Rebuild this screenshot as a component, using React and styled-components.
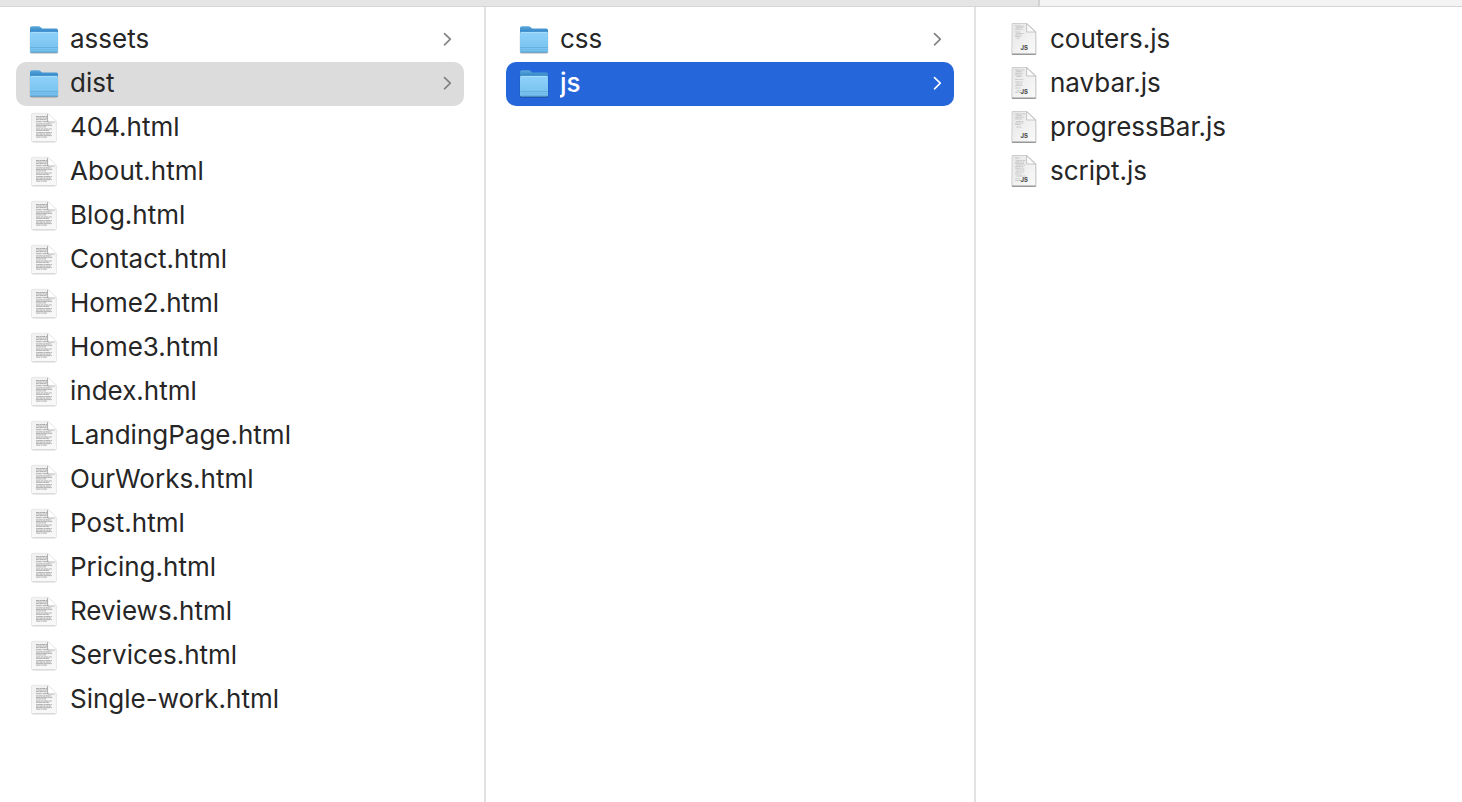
import React, { useState } from "react";
import styled, { createGlobalStyle } from "styled-components";

const GlobalStyle = createGlobalStyle`
  * { box-sizing: border-box; }
  body { margin: 0; background: #ffffff; }
`;

const Window = styled.main`
  display: flex;
  flex-direction: column;
  min-height: 100vh;
  font-family: Inter, "Liberation Sans", sans-serif;
  font-size: 26px;
  color: #262626;
  -webkit-font-smoothing: antialiased;
`;

const TabStrip = styled.div`
  display: grid;
  grid-template-columns: 1040fr 422fr;
  height: 7px;
  border-bottom: 1px solid #d6d6d6;
`;

const TabEdge = styled.div`
  background: ${(p) => (p.$active ? "#f3f3f3" : "#e5e5e5")};
  border-right: ${(p) => (p.$active ? "0" : "2px solid #d2d2d2")};
`;

const Columns = styled.div`
  flex: 1;
  display: grid;
  grid-template-columns: 486fr 490fr 486fr;
`;

const Column = styled.ul`
  list-style: none;
  margin: 0;
  min-width: 0;
  padding: 11px 20px 11px ${(p) => (p.$first ? "16px" : "20px")};
  border-right: ${(p) => (p.$last ? "0" : "2px solid #e2e2e2")};
`;

const highlights = { none: "transparent", path: "#dcdcdc", active: "#2566da" };

const Row = styled.button`
  display: flex;
  align-items: center;
  gap: 10px;
  width: 100%;
  height: 44px;
  padding: 0 12px;
  border: 0;
  border-radius: 10px;
  background: ${(p) => highlights[p.$highlight]};
  color: ${(p) => (p.$highlight === "active" ? "#ffffff" : "inherit")};
  font: inherit;
  font-weight: ${(p) => (p.$highlight === "active" ? 500 : 400)};
  text-align: left;
`;

const Name = styled.span`
  flex: 1;
  min-width: 0;
  line-height: 32px;
  padding-bottom: 2px;
  white-space: nowrap;
  overflow: hidden;
  text-overflow: ellipsis;
`;

const Glyph = styled.svg`
  display: block;
  flex: none;
`;

const ChevronGlyph = styled(Glyph)`
  color: ${(p) => (p.$light ? "#ffffff" : "#808080")};
`;

const Definitions = styled.svg`
  position: absolute;
`;

function Gradients() {
  return (
    <Definitions width="0" height="0" aria-hidden="true">
      <defs>
        <linearGradient id="folderBack" x1="0" y1="0" x2="0" y2="1">
          <stop offset="0" stopColor="#5ba9dc" />
          <stop offset="0.25" stopColor="#3d8ecb" />
          <stop offset="1" stopColor="#4a9bd2" />
        </linearGradient>
        <linearGradient id="folderFront" x1="0" y1="0" x2="0" y2="1">
          <stop offset="0" stopColor="#8ed1fa" />
          <stop offset="1" stopColor="#74c0ee" />
        </linearGradient>
        <linearGradient id="page" x1="0" y1="0" x2="0" y2="1">
          <stop offset="0" stopColor="#f1f1f1" />
          <stop offset="1" stopColor="#f9f9f9" />
        </linearGradient>
        <linearGradient id="script" x1="0" y1="0" x2="1" y2="1">
          <stop offset="0" stopColor="#e6e6e6" />
          <stop offset="1" stopColor="#fafafa" />
        </linearGradient>
      </defs>
    </Definitions>
  );
}

function FolderIcon() {
  return (
    <Glyph width="32" height="34" viewBox="0 0 32 34" aria-hidden="true">
      <rect x="1.6" y="9" width="28.8" height="21.8" rx="1.8" fill="#000" opacity="0.12" />
      <rect x="2" y="9" width="28" height="21.3" rx="1.5" fill="#000" opacity="0.28" />
      <path d="M2 5 Q2 3.2 3.8 3.2 H10.6 Q11.6 3.2 12.3 3.9 L13.6 5 Q14.2 5.6 15.2 5.6 H28.3 Q30 5.6 30 7.3 V20 H2Z" fill="url(#folderBack)" />
      <rect x="2" y="9" width="28" height="20.4" rx="1.2" fill="url(#folderFront)" />
      <path d="M3 9.4H29" stroke="#b0e2ff" strokeWidth="0.8" />
      <path d="M2.2 24.5H29.8" stroke="#61abd8" strokeWidth="0.8" />
      <path d="M2.2 26.5H29.8" stroke="#69b3e0" strokeWidth="0.6" />
      <path d="M2.8 29H29.2" stroke="#5299c9" strokeWidth="0.8" />
    </Glyph>
  );
}

const pageLines = [
  [5.5, 11, "3.4 .4 1.7 .3"], [7, 11, "1.5 .4 4.2 .5"], [8.6, 11, "2.8 .6 3.7 .3"],
  [10.7, 13, "5 .4 1.2 .5"],
  [12.9, 15.4, "2.1 .3 4.4 .5"], [14.4, 16, "3.9 .5 2.2 .3"], [15.9, 10, "1.8 .4 2.9 .3"],
  [18, 16, "4.3 .5 2.6 .3"], [19.4, 13, "2.4 .3 3.7 .5"],
  [21.6, 16, "1.6 .3 5.1 .5"], [23.1, 15, "3.3 .5 2.2 .3"], [24.6, 16, "2.7 .3 4.1 .5"], [26.1, 11, "4.6 .5 1.3 .3"],
];

function PageIcon() {
  return (
    <Glyph width="32" height="34" viewBox="0 0 32 34" aria-hidden="true">
      <path d="M5 2H20L28.8 10.6V29.8Q28.8 31.6 27 31.6H5Q3 31.6 3 29.8V4Q3 2 5 2Z" fill="#000" opacity="0.08" />
      <path d="M5 2.2H20L28.4 10.4V29.2Q28.4 30.8 26.8 30.8H5Q3.4 30.8 3.4 29.2V3.8Q3.4 2.2 5 2.2Z" fill="url(#page)" stroke="#dcdcdc" strokeWidth="0.5" />
      <path d="M4.6 30.8H27.2" stroke="#cccccc" strokeWidth="0.7" />
      {pageLines.map(([y, w, dashes]) => (
        <path key={y} d={`M8 ${y}h${w}`} stroke="#8c8c8c" strokeWidth="0.9" strokeDasharray={dashes} opacity="0.75" />
      ))}
      <path d="M19.6 3V9.8Q19.6 10.9 20.8 10.9H26.8" fill="none" stroke="#777777" strokeWidth="0.9" opacity="0.75" />
      <path d="M20 2.3L28.3 10.4H21Q20 10.4 20 9.4Z" fill="#ffffff" stroke="#d6d6d6" strokeWidth="0.4" />
    </Glyph>
  );
}

const codeLines = {
  short: [[3, 9], [4.6, 7], [6.2, 8], [9, 5], [10.4, 8], [12, 7], [13.4, 6], [15.2, 3]],
  long: [[3, 9], [4.6, 6], [6.2, 8], [8, 7], [9.4, 5], [12.4, 8], [15, 8], [17, 6], [18.6, 8], [21, 6], [23.8, 5], [25.4, 7]],
  medium: [[3, 10], [4.6, 6], [6.2, 9], [8, 7], [10.6, 7], [12, 8], [13.6, 6], [16, 5]],
  dense: [[3, 4], [5.4, 9], [7, 9], [8.6, 9], [10, 9], [11.6, 8], [13.2, 9], [15, 8], [17, 9], [19, 7], [21, 9], [23.8, 5], [25.4, 6]],
};

function ScriptIcon({ code }) {
  return (
    <Glyph width="32" height="34" viewBox="0 0 32 34" aria-hidden="true">
      <path d="M4 .3H19L28.4 9V31.2Q28.4 32 27.4 32H4.6Q3.6 32 3.6 31Z" fill="#000" opacity="0.2" />
      <path d="M4 .5H18.6L27.6 9V30.9H4Z" fill="url(#script)" stroke="#c2c2c2" strokeWidth="0.6" />
      <path d="M4 31.2H27.7" stroke="#858585" strokeWidth="1" />
      {codeLines[code].map(([y, w], i) => (
        <path key={y} d={`M${i % 3 === 1 ? 8.4 : 7.2} ${y}h${w}`} stroke="#999999" strokeWidth="0.7" strokeDasharray={i % 2 ? "3 .5 2 .6" : "5 .4 1.6 .5"} opacity="0.65" />
      ))}
      <path d="M18.6 .7V9H27.4Z" fill="#fafafa" stroke="#b2b2b2" strokeWidth="0.7" />
      <g opacity="0.9">
        <text x="16.3" y="27" textAnchor="middle" fontFamily="Inter, sans-serif" fontSize="6" fontWeight="700" fill="#303030">JS</text>
      </g>
    </Glyph>
  );
}

function Chevron({ light }) {
  return (
    <ChevronGlyph $light={light} width="12" height="18" viewBox="0 0 12 18" aria-hidden="true">
      <path d="M4.5 2.6L10.3 8.2L4.5 13.8" fill="none" stroke="currentColor" strokeWidth="1.6" strokeLinecap="round" strokeLinejoin="round" />
    </ChevronGlyph>
  );
}

function Entry({ name, kind, code, highlight = "none", onSelect }) {
  return (
    <li>
      <Row type="button" $highlight={highlight} onClick={onSelect}>
        {kind === "folder" && <FolderIcon />}
        {kind === "html" && <PageIcon />}
        {kind === "js" && <ScriptIcon code={code} />}
        <Name>{name}</Name>
        {kind === "folder" && <Chevron light={highlight === "active"} />}
      </Row>
    </li>
  );
}

const pages = [
  "404", "About", "Blog", "Contact", "Home2", "Home3", "index", "LandingPage",
  "OurWorks", "Post", "Pricing", "Reviews", "Services", "Single-work",
];

const projectEntries = [
  { name: "assets", kind: "folder" },
  { name: "dist", kind: "folder" },
  ...pages.map((page) => ({ name: `${page}.html`, kind: "html" })),
];

const distEntries = [
  { name: "css", kind: "folder" },
  { name: "js", kind: "folder" },
];

const scriptEntries = [
  { name: "couters.js", kind: "js", code: "short" },
  { name: "navbar.js", kind: "js", code: "long" },
  { name: "progressBar.js", kind: "js", code: "medium" },
  { name: "script.js", kind: "js", code: "dense" },
];

export default function App() {
  const [path, setPath] = useState(["dist", "js", null]);
  const columns = [projectEntries, distEntries, scriptEntries];
  const deepest = path.reduce((last, name, i) => (name ? i : last), 0);

  return (
    <Window>
      <GlobalStyle />
      <Gradients />
      <TabStrip>
        <TabEdge />
        <TabEdge $active />
      </TabStrip>
      <Columns>
        {columns.map((entries, depth) => (
          <Column key={depth} $first={depth === 0} $last={depth === columns.length - 1}>
            {entries.map((entry) => (
              <Entry
                key={entry.name}
                {...entry}
                highlight={path[depth] !== entry.name ? "none" : depth === deepest ? "active" : "path"}
                onSelect={() => setPath(path.map((name, i) => (i === depth ? entry.name : i < depth ? name : null)))}
              />
            ))}
          </Column>
        ))}
      </Columns>
    </Window>
  );
}
